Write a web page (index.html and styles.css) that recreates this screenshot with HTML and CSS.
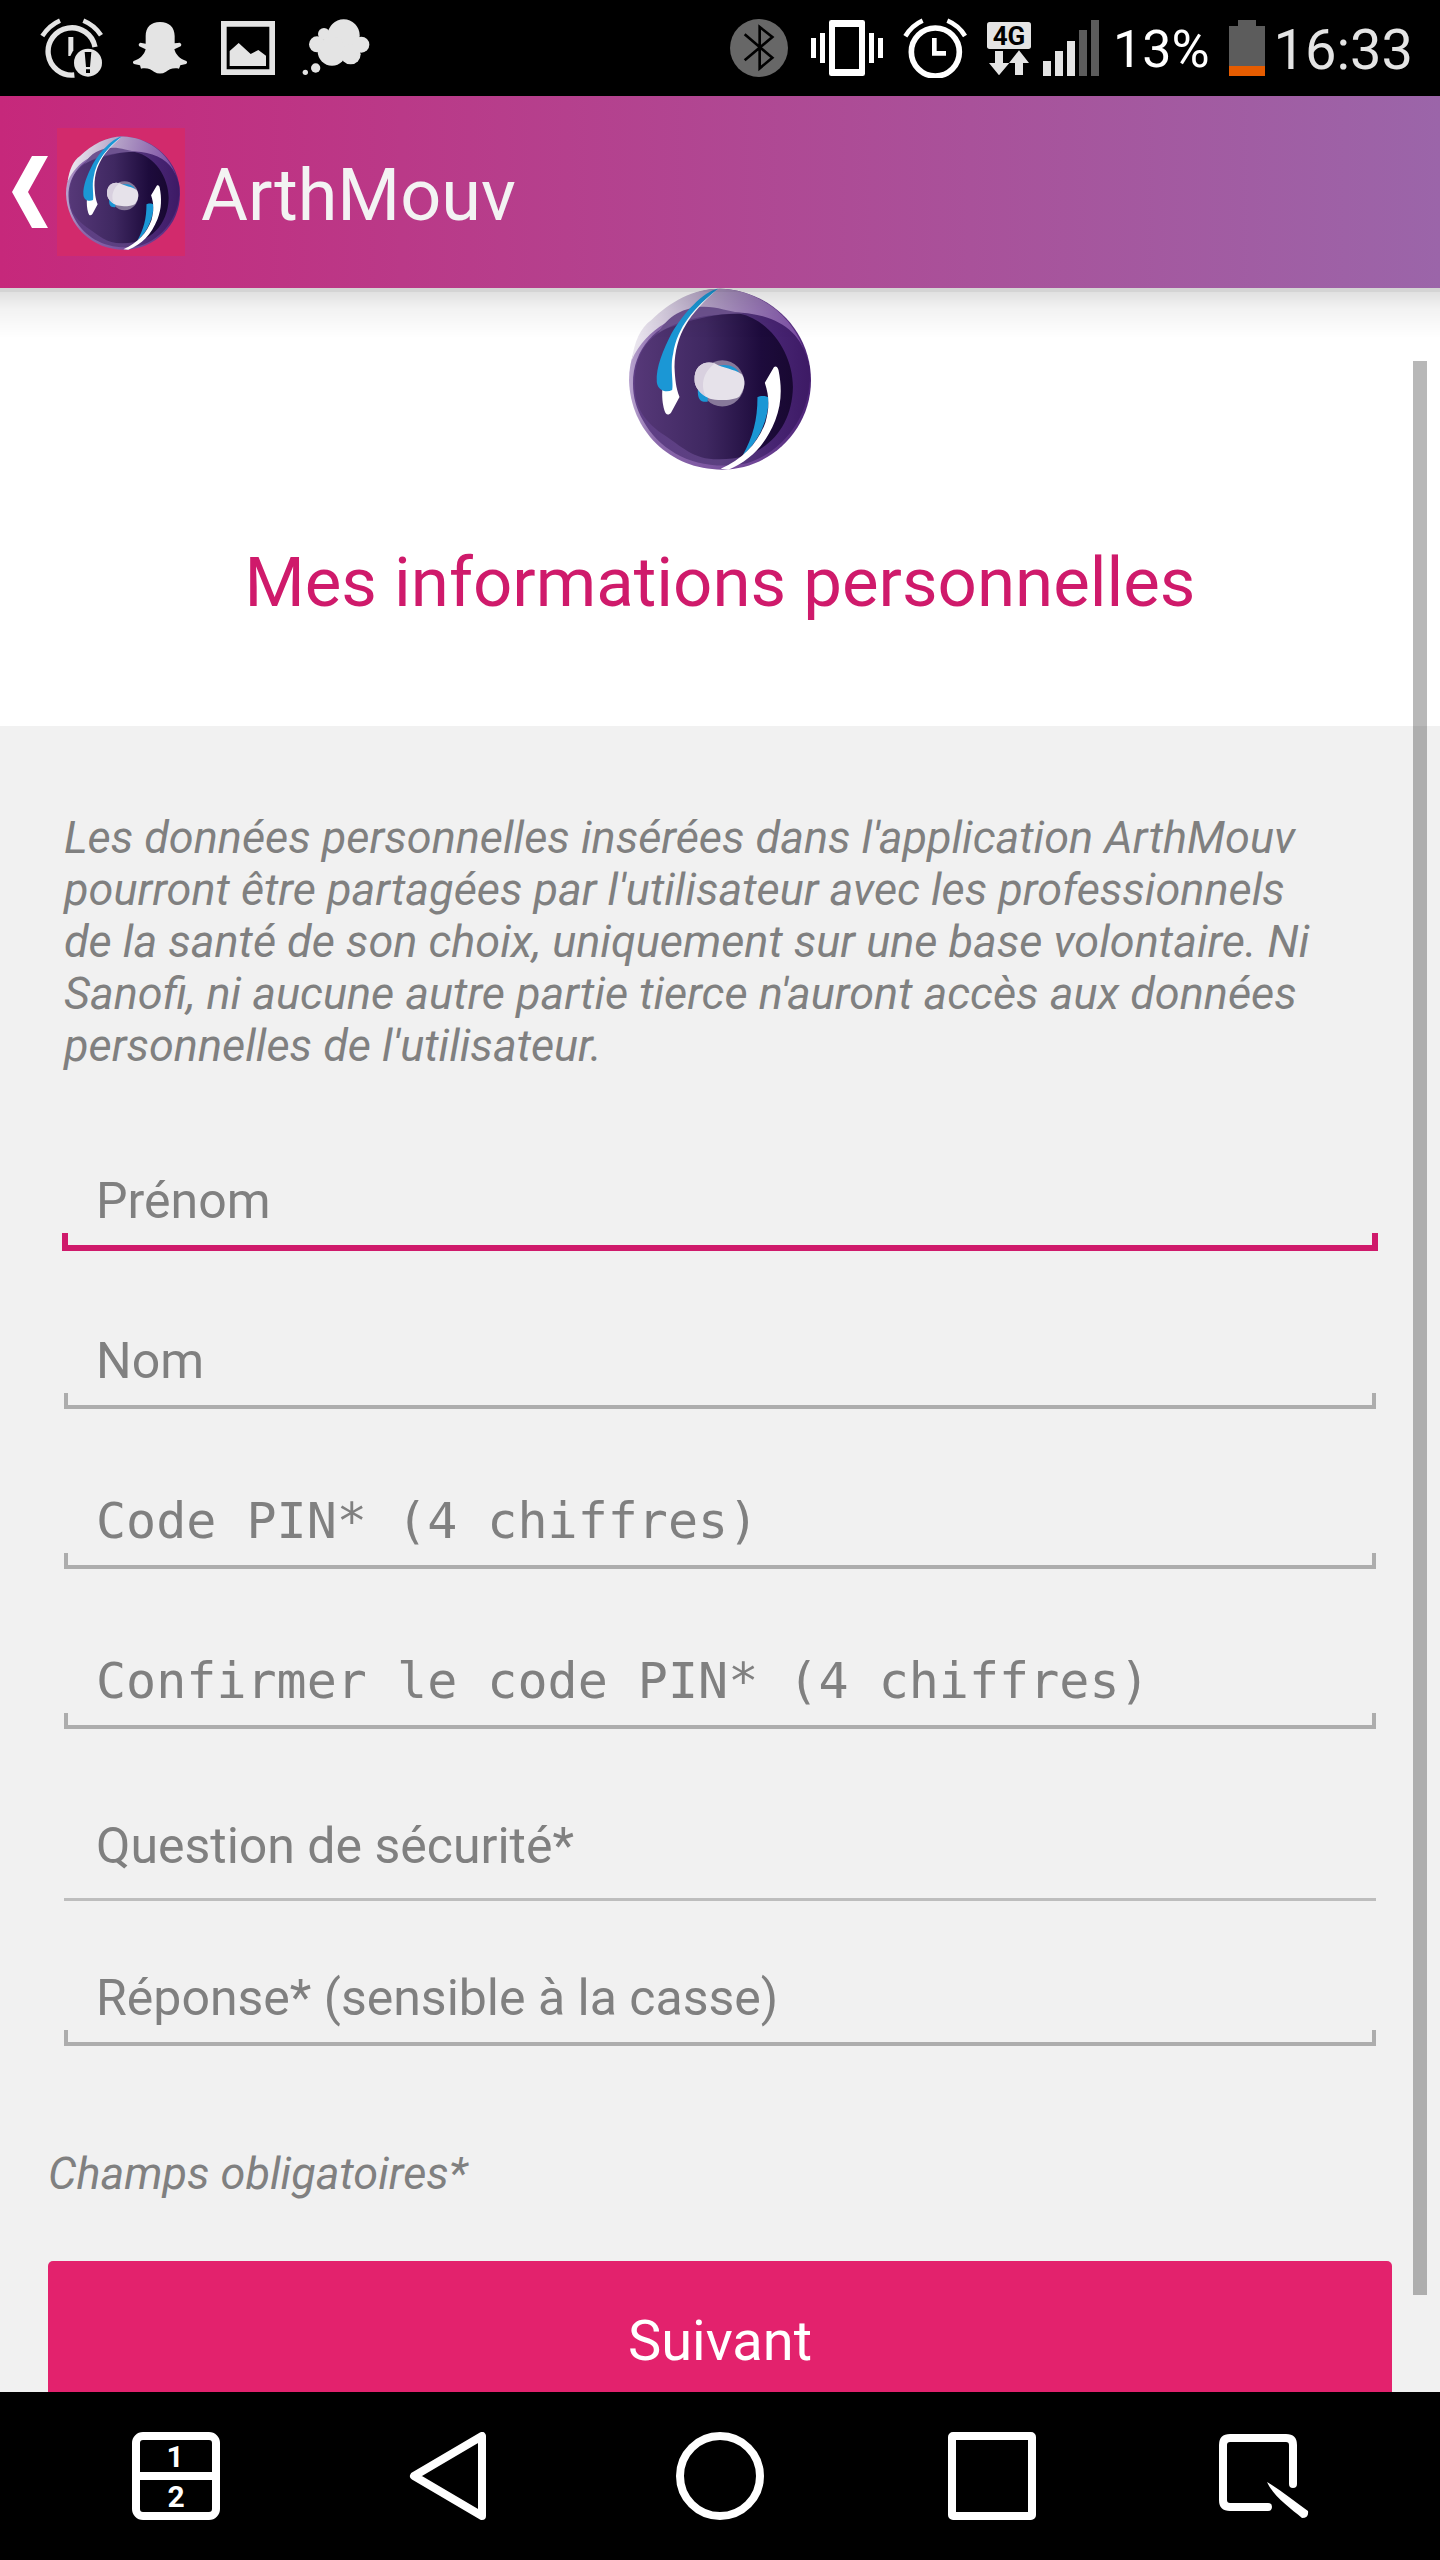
FILE: index.html
```html
<!DOCTYPE html>
<html lang="fr">
<head>
<meta charset="utf-8">
<meta name="viewport" content="width=device-width, initial-scale=1">
<title>ArthMouv</title>
<link rel="stylesheet" href="styles.css">
</head>
<body>
<svg class="sprite" aria-hidden="true">
  <defs>
    <linearGradient id="outer" x1="0" x2="1"><stop offset="0" stop-color="#b9a5cf"/><stop offset=".15" stop-color="#8a69ab"/><stop offset=".7" stop-color="#6f4596"/><stop offset="1" stop-color="#4c2377"/></linearGradient>
    <linearGradient id="sheen" x1="0" y1=".3" x2="1" y2=".4"><stop offset="0" stop-color="#f4f2f6"/><stop offset=".4" stop-color="#b9a8ca"/><stop offset="1" stop-color="#7a4ca3"/></linearGradient>
    <linearGradient id="mid" x1="0" x2="1"><stop offset="0" stop-color="#5f3f86"/><stop offset=".5" stop-color="#5b4080"/><stop offset=".8" stop-color="#472472"/><stop offset="1" stop-color="#3d1a65"/></linearGradient>
    <linearGradient id="core" x1="0" x2="1"><stop offset="0" stop-color="#563878"/><stop offset=".45" stop-color="#3f2861"/><stop offset=".8" stop-color="#1d0b3c"/><stop offset="1" stop-color="#180831"/></linearGradient>
    <symbol id="logo" viewBox="88 54 544 544">
      <path fill="url(#outer)" d="M88 330C88 265 110 215 150 165C220 90 290 56 360 56C510 60 632 180 632 330C632 480 510 597 365 597C210 597 92 480 88 330Z"/>
      <path fill="url(#sheen)" d="M96 270C105 215 120 175 155 150C210 95 280 56 360 56C470 58 580 135 612 245C560 165 490 130 400 130C290 100 150 150 96 270Z"/>
      <path fill="url(#mid)" d="M100 340C100 235 170 160 270 142C350 122 430 120 500 142C570 165 610 210 628 290C640 430 550 545 440 578C300 605 185 550 130 450C110 415 100 380 100 340Z"/>
      <path fill="#6e5390" d="M175 190C210 120 290 95 370 118L430 131C340 128 240 145 175 190Z"/>
      <path fill="url(#core)" d="M105 330C108 240 155 185 230 165C300 143 350 130 420 131C510 150 578 250 578 350C575 480 490 566 360 566C280 568 250 530 185 488C125 445 102 400 105 330Z"/>
      <path fill="#fff" d="M354 56C270 130 226 190 224 290C226 330 228 350 239 380L214 426C206 436 198 434 194 420C188 400 186 380 188 350C190 240 250 130 354 56Z"/>
      <path fill="#1b97d5" d="M354 56C310 64 250 130 215 190C190 240 168 290 171 335C174 362 200 368 217 359C222 340 210 290 220 250C232 170 285 110 354 56Z"/>
      <path fill="#1b97d5" d="M472 380C480 375 500 375 506 382C506 440 480 510 428 554C458 500 472 450 472 380Z"/>
      <path fill="#fff" d="M521 291C526 286 533 290 535 300C545 350 545 400 525 450C495 525 450 570 385 597L362 594C430 565 475 515 496 455C508 410 508 380 494 337Z"/>
      <ellipse cx="367" cy="339" rx="66" ry="69" fill="#87799a"/>
      <path fill="#1b97d5" d="M355 286C385 280 410 290 419 310L360 330ZM294 355C292 385 300 396 323 394L325 350Z"/>
      <path fill="#e6e2ea" d="M284 330C282 285 315 270 345 280C370 295 400 295 425 312C438 330 435 355 418 378C400 391 350 391 330 385C300 372 284 350 284 330Z"/>
      <path fill="#d8d0df" d="M284 330C282 285 315 270 345 280C315 300 298 340 318 379C300 368 284 350 284 330Z"/>
    </symbol>
  </defs>
</svg>

<div class="statusbar">
  <div class="notifications">
    <svg width="64" height="60" viewBox="120 54 192 180" aria-hidden="true">
      <g fill="none" stroke="#e4e4e4" stroke-width="16"><path d="M285 141A71 71 0 1 0 223 225"/><path d="M127 108Q148 76 180 62M250 62Q284 76 303 106" stroke-width="14"/></g>
      <path fill="#e4e4e4" d="M205 111h15v40l-9 17h-6z"/><circle cx="264" cy="188" r="42" fill="#e4e4e4"/>
      <path fill="#000" d="M254 156h20l-4 45h-12zM258 208h12v11h-12z"/>
    </svg>
    <svg width="64" height="60" viewBox="390 54 192 180" aria-hidden="true">
      <path fill="#e4e4e4" d="M480 66C508 66 524 82 524 108V130L539 128Q547 132 542 139L523 148C527 163 539 177 559 183Q564 188 558 192L541 196L537 206C520 202 506 208 498 215Q480 226 462 215C454 208 440 202 423 206L420 196L402 192Q396 188 401 183C421 177 433 163 437 148L418 139Q413 132 421 128L437 131V108C437 82 452 66 480 66Z"/>
    </svg>
    <svg width="56" height="60" viewBox="660 54 168 180" aria-hidden="true">
      <path fill="none" stroke="#e4e4e4" stroke-width="17" d="M671.500 71.500h145v145h-145z"/><path fill="#e4e4e4" d="M689 153l27-24 36 33 23-12 23 17v31H689z"/>
    </svg>
    <svg width="68" height="60" viewBox="906 54 204 180" aria-hidden="true">
      <g fill="#e4e4e4"><circle cx="1031" cy="106" r="48"/><circle cx="972" cy="102" r="18"/><circle cx="951" cy="133" r="24"/><circle cx="996" cy="154" r="43"/><circle cx="1052" cy="163" r="30"/><circle cx="1084" cy="134" r="24"/><circle cx="947" cy="204" r="14"/><circle cx="916" cy="217" r="8"/></g>
    </svg>
  </div>
  <div class="system">
    <svg width="60" height="60" viewBox="87 54 180 180" aria-hidden="true">
      <circle cx="177" cy="144" r="87" fill="#676767"/><path fill="none" stroke="#000" stroke-width="8" d="M134 103L217 173L179 205V81L217 111L134 181"/>
    </svg>
    <svg width="78" height="60" viewBox="321 54 234 180" aria-hidden="true">
      <path fill="#fff" fill-rule="evenodd" d="M394 60h94q7 0 7 7v154q0 7-7 7h-94q-7 0-7-7V67q0-7 7-7zM405 81v126h72V81zM333 114h15v60h-15zM360 99h15v90h-15zM507 99h15v90h-15zM534 114h15v60h-15z"/>
    </svg>
    <svg width="66" height="60" viewBox="609 54 198 180" aria-hidden="true">
      <g fill="none" stroke="#fff"><circle cx="706" cy="156" r="72" stroke-width="17"/><path d="M616 109Q636 76 668 62M742 62Q776 76 795 108" stroke-width="14"/><path d="M703 114v46h35" stroke-width="14"/></g>
    </svg>
    <div class="reading">
      <svg width="112" height="60" viewBox="861 54 336 180" role="img" aria-label="4G">
        <rect x="861" y="66" width="132" height="81" rx="8" fill="#e4e4e4"/>
        <text class="network" x="927" y="134" text-anchor="middle">4G</text>
        <path fill="#e4e4e4" d="M885 153h24v36h19l-31 37-30-37h18zM945 225h24v-36h18l-30-38-30 38h18zM1029 183h24v45h-24zM1065 153h24v75h-24zM1101 123h24v105h-24z"/><path fill="#5c5c5c" d="M1137 90h24v138h-24zM1173 60h24v168h-24z"/>
      </svg>
      <span class="percent">13%</span>
    </div>
    <div class="clockgroup">
      <svg width="38" height="60" viewBox="564 54 114 180" aria-hidden="true"><path fill="#5c5c5c" d="M594 60h54v18h27v120H567V78h27z"/><path fill="#e65c00" d="M567 198h108v30H567z"/></svg>
      <time class="clock">16:33</time>
    </div>
  </div>
</div>

<header class="appbar">
  <a class="back" href="#" aria-label="Retour">
    <svg width="36" height="72" viewBox="0 0 36 72" aria-hidden="true"><path fill="#fff" d="M20 0h16L16 36l20 36H20L0 36z"/></svg>
    <span class="appicon"><svg width="114" height="114" aria-hidden="true"><use href="#logo"/></svg></span>
  </a>
  <span class="appname">ArthMouv</span>
</header>

<div class="viewport">
  <main class="content">
    <section class="intro">
      <svg class="brand" width="182" height="182" role="img" aria-label="Logo ArthMouv"><use href="#logo"/></svg>
      <h1 class="title">Mes informations personnelles</h1>
    </section>
    <form class="form">
      <p class="notice">Les données personnelles insérées dans l'application ArthMouv pourront être partagées par l'utilisateur avec les professionnels de la santé de son choix, uniquement sur une base volontaire. Ni Sanofi, ni aucune autre partie tierce n'auront accès aux données personnelles de l'utilisateur.</p>
      <div class="fields">
        <input class="field active" type="text" aria-label="Prénom" placeholder="Prénom">
        <input class="field" type="text" aria-label="Nom" placeholder="Nom">
        <input class="field pin" type="password" maxlength="4" inputmode="numeric" aria-label="Code PIN (4 chiffres)" placeholder="Code PIN* (4 chiffres)">
        <input class="field pin" type="password" maxlength="4" inputmode="numeric" aria-label="Confirmer le code PIN (4 chiffres)" placeholder="Confirmer le code PIN* (4 chiffres)">
      </div>
      <div class="security">
        <select class="question" aria-label="Question de sécurité"><option>Question de sécurité*</option></select>
        <input class="field" type="text" aria-label="Réponse (sensible à la casse)" placeholder="Réponse* (sensible à la casse)">
      </div>
      <p class="required">Champs obligatoires*</p>
      <button class="next" type="button">Suivant</button>
    </form>
  </main>
  <div class="thumb"></div>
</div>

<nav class="navbar">
  <button class="navkey" type="button" aria-label="Double fenêtre"><svg width="88" height="88" viewBox="0 0 88 88" aria-hidden="true"><rect x="4" y="4" width="80" height="80" rx="7"/><path d="M4 44h80"/><text class="digit" x="43" y="35" text-anchor="middle">1</text><text class="digit" x="44" y="75" text-anchor="middle">2</text></svg></button>
  <button class="navkey" type="button" aria-label="Retour"><svg width="88" height="88" viewBox="0 0 88 88" aria-hidden="true"><path d="M78 4v80L10 44z"/></svg></button>
  <button class="navkey" type="button" aria-label="Accueil"><svg width="88" height="88" viewBox="0 0 88 88" aria-hidden="true"><circle cx="44" cy="44" r="40"/></svg></button>
  <button class="navkey" type="button" aria-label="Applications récentes"><svg width="88" height="88" viewBox="0 0 88 88" aria-hidden="true"><rect x="4" y="4" width="80" height="80" rx="1"/></svg></button>
  <button class="navkey" type="button" aria-label="Mémo"><svg width="90" height="88" viewBox="0 0 90 88" aria-hidden="true"><path stroke-linecap="round" d="M74 52V13Q74 6 67 6H11Q4 6 4 13V68Q4 75 11 75H49"/><path class="pen" d="M48 50C62 58 76 70 89 79Q90 86 83 86C71 76 54 64 48 50Z"/></svg></button>
</nav>
</body>
</html>
```
FILE: styles.css
```css
* {
  box-sizing: border-box;
}

body {
  margin: 0;
  height: 100vh;
  display: flex;
  flex-direction: column;
  background: #000;
  color: #808080;
  font-family: Roboto, "Noto Sans", sans-serif;
  font-size: 50px;
}

svg {
  display: block;
  flex: none;
}

.sprite {
  position: absolute;
  width: 0;
  height: 0;
}

/* System status bar */
.statusbar {
  flex: none;
  display: flex;
  align-items: center;
  justify-content: space-between;
  padding: 18px 27px 18px 40px;
  line-height: 56px;
}

.notifications {
  display: flex;
  gap: 26px;
}

.system {
  display: flex;
  align-items: center;
  gap: 18px;
}

.reading {
  display: flex;
  align-items: center;
  gap: 14px;
}

.clockgroup {
  display: flex;
  align-items: center;
  gap: 8px;
}

.network {
  font-size: 78px;
  font-weight: 700;
  fill: #000;
}

.percent {
  padding-top: 4px;
  font-size: 52px;
  color: #fff;
}

.clock {
  padding-top: 4px;
  font-size: 56px;
  color: #e4e4e4;
}

/* Application bar */
.appbar {
  position: relative;
  z-index: 1;
  flex: none;
  display: flex;
  align-items: center;
  gap: 16px;
  padding: 32px 12px;
  background: linear-gradient(90deg, #c6287b, #9b65a9);
}

.appbar::after {
  content: "";
  position: absolute;
  top: 100%;
  left: 0;
  right: 0;
  height: 50px;
  background: linear-gradient(rgba(0, 0, 0, .17) 4px, rgba(0, 0, 0, .12) 4px, rgba(0, 0, 0, .05) 20px, transparent);
  pointer-events: none;
}

.back {
  display: flex;
  align-items: center;
  gap: 9px;
}

.appicon {
  padding: 8px 5px 6px 9px;
  background: #d22a6c;
}

.appname {
  padding-top: 8px;
  font-size: 72px;
  line-height: 84px;
  color: #f3f3f3;
}

/* Scrolling page */
.viewport {
  position: relative;
  flex: 1;
  min-height: 0;
}

.content {
  height: 100%;
  overflow-y: auto;
  scrollbar-width: none;
  background: #f1f1f1;
}

.thumb {
  position: absolute;
  top: 73px;
  right: 13px;
  bottom: 97px;
  width: 14px;
  background: rgba(0, 0, 0, .28);
}

.intro {
  display: flex;
  flex-direction: column;
  align-items: center;
  gap: 72px;
  padding-bottom: 102px;
  background: #fff;
}

.title {
  margin: 0;
  font-size: 69px;
  line-height: 82px;
  font-weight: 400;
  color: #cf1a6b;
}

.form {
  display: flex;
  flex-direction: column;
  padding: 86px 48px 48px;
}

.notice,
.required {
  margin: 0;
  font-size: 45px;
  line-height: 52px;
  font-style: italic;
}

.notice {
  padding: 0 64px 0 16px;
}

.fields {
  display: flex;
  flex-direction: column;
  gap: 60px;
  padding: 79px 14px 60px;
}

.security {
  display: flex;
  flex-direction: column;
  gap: 47px;
  padding: 0 14px 100px;
}

.field,
.question {
  width: 100%;
  height: 100px;
  padding: 0 34px;
  border: 0;
  border-radius: 0;
  outline: 0;
  font: inherit;
  color: inherit;
}

/* Underline with a short upright tick at each end */
.field {
  background:
    linear-gradient(#adadad, #adadad) 2px calc(100% - 2px) / 4px 16px no-repeat,
    linear-gradient(#adadad, #adadad) calc(100% - 2px) calc(100% - 2px) / 4px 16px no-repeat,
    linear-gradient(#adadad, #adadad) 50% calc(100% - 2px) / calc(100% - 4px) 4px no-repeat;
}

.field.active {
  background:
    linear-gradient(#cf1a6b, #cf1a6b) 0 100% / 6px 18px no-repeat,
    linear-gradient(#cf1a6b, #cf1a6b) 100% 100% / 6px 18px no-repeat,
    linear-gradient(#cf1a6b, #cf1a6b) 0 100% / 100% 6px no-repeat;
}

.field::placeholder {
  color: #808080;
  opacity: 1;
}

.field.pin {
  font-family: "DejaVu Sans Mono", monospace;
}

.question {
  height: 110px;
  appearance: none;
  background: linear-gradient(#bdbdbd, #bdbdbd) 50% 100% / calc(100% - 4px) 3px no-repeat;
}

.next {
  height: 160px;
  margin-top: 61px;
  padding: 0;
  border: 0;
  border-radius: 5px;
  background: #e3226d;
  font: inherit;
  font-size: 56px;
  color: #fff;
}

/* System navigation keys */
.navbar {
  flex: none;
  display: flex;
  padding: 40px;
}

.navkey {
  flex: 1;
  display: flex;
  justify-content: center;
  padding: 0;
  border: 0;
  background: none;
  fill: none;
  stroke: #fff;
  stroke-width: 8px;
  stroke-linejoin: round;
}

.digit {
  font: 700 30px Roboto, sans-serif;
  fill: #fff;
  stroke: none;
}

.pen {
  fill: #fff;
  stroke: none;
}
```
